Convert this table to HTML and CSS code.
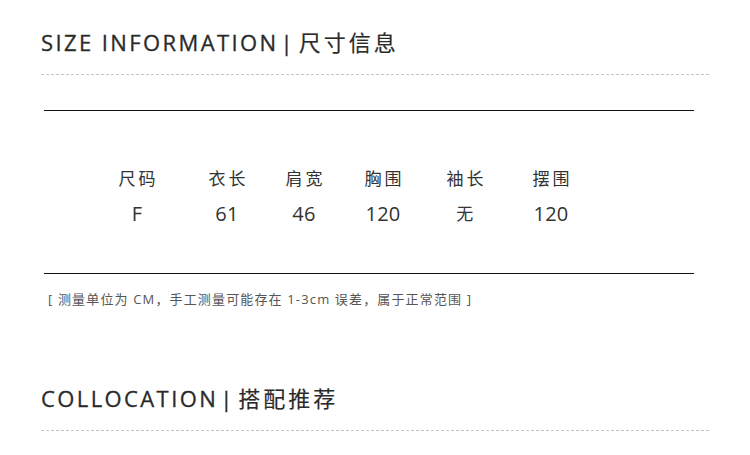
FILE: index.html
```html
<!DOCTYPE html>
<html lang="zh">
<head>
<meta charset="utf-8">
<link rel="stylesheet" href="styles.css">
</head>
<body>
<section class="block">
  <h2 class="title">SIZE INFORMATION<span class="bar">|</span><span class="cn">尺寸信息</span></h2>
  <div class="dash"></div>
</section>
<div class="table">
  <div class="row head">
    <div>尺码</div><div>衣长</div><div>肩宽</div><div>胸围</div><div>袖长</div><div>摆围</div>
  </div>
  <div class="row vals">
    <div>F</div><div>61</div><div>46</div><div>120</div><div class="cnv">无</div><div>120</div>
  </div>
</div>
<p class="note">[ 测量单位为 CM，手工测量可能存在 1-3cm 误差，属于正常范围 ]</p>
<section class="block second">
  <h2 class="title">COLLOCATION<span class="bar">|</span><span class="cn">搭配推荐</span></h2>
  <div class="dash"></div>
</section>
</body>
</html>
```
FILE: styles.css
```css
html, body {
  margin: 0;
  padding: 0;
  background: #fff;
}
body {
  width: 750px;
  height: 455px;
  overflow: hidden;
  font-family: "Open Sans", "Noto Sans CJK SC", sans-serif;
  color: #2c2c2c;
}
.block {
  padding: 0 41px 0 41px;
}
.title {
  margin: 0;
  padding-top: 27px;
  height: 30px;
  font-size: 22px;
  line-height: 30px;
  font-weight: 400;
  letter-spacing: 2.4px;
  color: #2a2a2a;
  white-space: nowrap;
  -webkit-text-stroke: 0.3px #2a2a2a;
}
.title .bar {
  margin: 0 6px 0 2px;
  letter-spacing: 0;
}
.title .cn {
  letter-spacing: 3px;
  font-size: 22px;
  line-height: 20px;
  -webkit-text-stroke: 0.15px #2a2a2a;
}
.dash {
  margin-top: 17px;
  height: 1px;
  background: repeating-linear-gradient(to right, #c4c4c4 0 3px, transparent 3px 5px);
}
.table {
  margin: 35px 56px 0 44px;
  border-top: 1px solid #111;
  border-bottom: 1px solid #111;
  padding: 56px 0 47px 48px;
}
.row {
  display: grid;
  grid-template-columns: 90px 90px 64px 94px 70px 102px;
  text-align: center;
}
.head {
  font-size: 17px;
  line-height: 24px;
  letter-spacing: 3px;
  color: #333;
}
.head div {
  padding-left: 3px;
}
.vals {
  margin-top: 11px;
  font-size: 20px;
  line-height: 24px;
  letter-spacing: 0.3px;
  color: #333;
}
.vals .cnv {
  font-size: 17px;
}
.note {
  margin: 16px 0 0 48px;
  font-size: 13px;
  line-height: 18px;
  letter-spacing: 1.15px;
  color: #555;
}
.second .title {
  padding-top: 75px;
}
```
